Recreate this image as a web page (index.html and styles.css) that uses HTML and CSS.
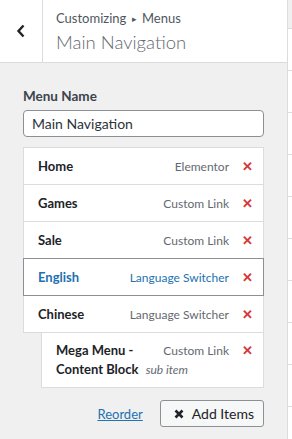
FILE: index.html
```html
<!DOCTYPE html>
<html lang="en">
<head>
    <meta charset="UTF-8">
    <title>Menus</title>
    <link rel="stylesheet" href="styles.css">
</head>
<body>
    <div class="sidebar">
        <div class="header">
            <div class="back">
                <svg width="10" height="14" viewBox="0 0 10 14"><path d="M7.5 1.5 L2.5 7 L7.5 12.5" fill="none" stroke="#1d2327" stroke-width="2.4"/></svg>
            </div>
            <div class="titles">
                <div class="crumb">Customizing <span class="sep">&#9656;</span> Menus</div>
                <div class="title">Main Navigation</div>
            </div>
        </div>

        <div class="content">
            <label class="label" for="menu-name">Menu Name</label>
            <input type="text" id="menu-name" class="name-input" value="Main Navigation">

            <ul class="items">
                <li class="item">
                    <span class="item-title">Home</span>
                    <span class="item-type">Elementor</span>
                    <span class="remove">&#10005;</span>
                </li>
                <li class="item">
                    <span class="item-title">Games</span>
                    <span class="item-type">Custom Link</span>
                    <span class="remove">&#10005;</span>
                </li>
                <li class="item">
                    <span class="item-title">Sale</span>
                    <span class="item-type">Custom Link</span>
                    <span class="remove">&#10005;</span>
                </li>
                <li class="item active">
                    <span class="item-title">English</span>
                    <span class="item-type">Language Switcher</span>
                    <span class="remove">&#10005;</span>
                </li>
                <li class="item">
                    <span class="item-title">Chinese</span>
                    <span class="item-type">Language Switcher</span>
                    <span class="remove">&#10005;</span>
                </li>
                <li class="item sub">
                    <span class="item-title">Mega Menu -<br>Content Block <em class="sub-label">sub item</em></span>
                    <span class="item-type">Custom Link</span>
                    <span class="remove">&#10005;</span>
                </li>
            </ul>

            <div class="actions">
                <a href="#" class="reorder">Reorder</a>
                <button class="add-items">
                    <svg width="10" height="10" viewBox="0 0 10 10"><path d="M1.5 1.5 L8.5 8.5 M8.5 1.5 L1.5 8.5" stroke="#1d2327" stroke-width="2.6"/></svg>
                    Add Items
                </button>
            </div>
        </div>
    </div>
    <div class="strip">
        <div class="strip-top"></div>
        <div class="strip-row"></div>
        <div class="strip-row"></div>
        <div class="strip-row"></div>
        <div class="strip-row"></div>
        <div class="strip-row"></div>
        <div class="strip-row"></div>
        <div class="strip-row"></div>
        <div class="strip-row"></div>
        <div class="strip-row"></div>
        <div class="strip-row"></div>
    </div>
</body>
</html>
```

FILE: styles.css
```css
body {
    margin: 0;
    display: flex;
    height: 439px;
    overflow: hidden;
    font-family: Lato, "Open Sans", sans-serif;
    color: #1d2327;
}
.sidebar {
    width: 287px;
    flex: none;
    background: #f0f0f1;
    border-right: 1px solid #dcdcde;
}
.header {
    display: flex;
    height: 62px;
    background: #fff;
    border-bottom: 1px solid #dcdcde;
}
.back {
    width: 42px;
    border-right: 1px solid #dcdcde;
    display: flex;
    align-items: center;
    justify-content: center;
}
.titles {
    padding: 8px 0 0 13px;
}
.crumb {
    font-size: 13px;
    line-height: 20px;
    color: #50575e;
}
.sep {
    font-size: 9px;
    margin: 0 2px;
    position: relative;
    top: -1px;
}
.title {
    font-size: 18.5px;
    font-weight: 300;
    line-height: 25px;
    color: #646970;
}
.content {
    padding: 24px 23px 0 23px;
}
.label {
    display: block;
    font-size: 13.5px;
    font-weight: 700;
    line-height: 18px;
    color: #3c434a;
}
.name-input {
    display: block;
    box-sizing: border-box;
    width: 241px;
    height: 27px;
    margin-top: 5px;
    padding: 0 8px;
    border: 1px solid #8c8f94;
    border-radius: 4px;
    font-family: inherit;
    font-size: 14px;
    color: #2c3338;
    background: #fff;
}
.items {
    list-style: none;
    margin: 10px 0 0 0;
    padding: 0;
}
.item {
    display: flex;
    align-items: center;
    box-sizing: border-box;
    height: 38px;
    margin-top: -1px;
    padding: 0 11px 0 14px;
    background: #fff;
    border: 1px solid #dcdcde;
}
.item:first-child {
    margin-top: 0;
}
.item.active {
    border-color: #8c8f94;
    position: relative;
}
.item-title {
    flex: 1;
    min-width: 0;
    white-space: nowrap;
    font-size: 13px;
    font-weight: 700;
    line-height: 19px;
}
.item-type {
    font-size: 12px;
    color: #646970;
}
.active .item-title,
.active .item-type {
    color: #2271b1;
}
.remove {
    width: 10px;
    margin-left: 13px;
    color: #d63638;
    font-size: 13px;
    font-weight: bold;
    text-align: center;
}
.item.sub {
    margin-left: 18px;
    height: 56px;
    align-items: flex-start;
    padding-top: 8px;
}
.sub .item-type,
.sub .remove {
    line-height: 19px;
}
.sub-label {
    font-size: 12px;
    font-weight: normal;
    color: #646970;
    margin-left: 4px;
}
.actions {
    display: flex;
    justify-content: flex-end;
    align-items: center;
    margin-top: 12px;
}
.reorder {
    font-size: 13px;
    color: #2271b1;
    margin-right: 17px;
}
.add-items {
    display: flex;
    align-items: center;
    gap: 8px;
    height: 27px;
    padding: 0 9px 0 13px;
    background: #f6f7f7;
    border: 1px solid #8c8f94;
    border-radius: 3px;
    font-family: inherit;
    font-size: 14px;
    color: #1d2327;
}
.strip {
    flex: 1;
    background: #fff;
}
.strip-top {
    height: 28px;
    background: #f0f0f1;
    border-bottom: 1px solid #dcdcde;
}
.strip-row {
    height: 41px;
    border-bottom: 1px solid #dcdcde;
}
```
